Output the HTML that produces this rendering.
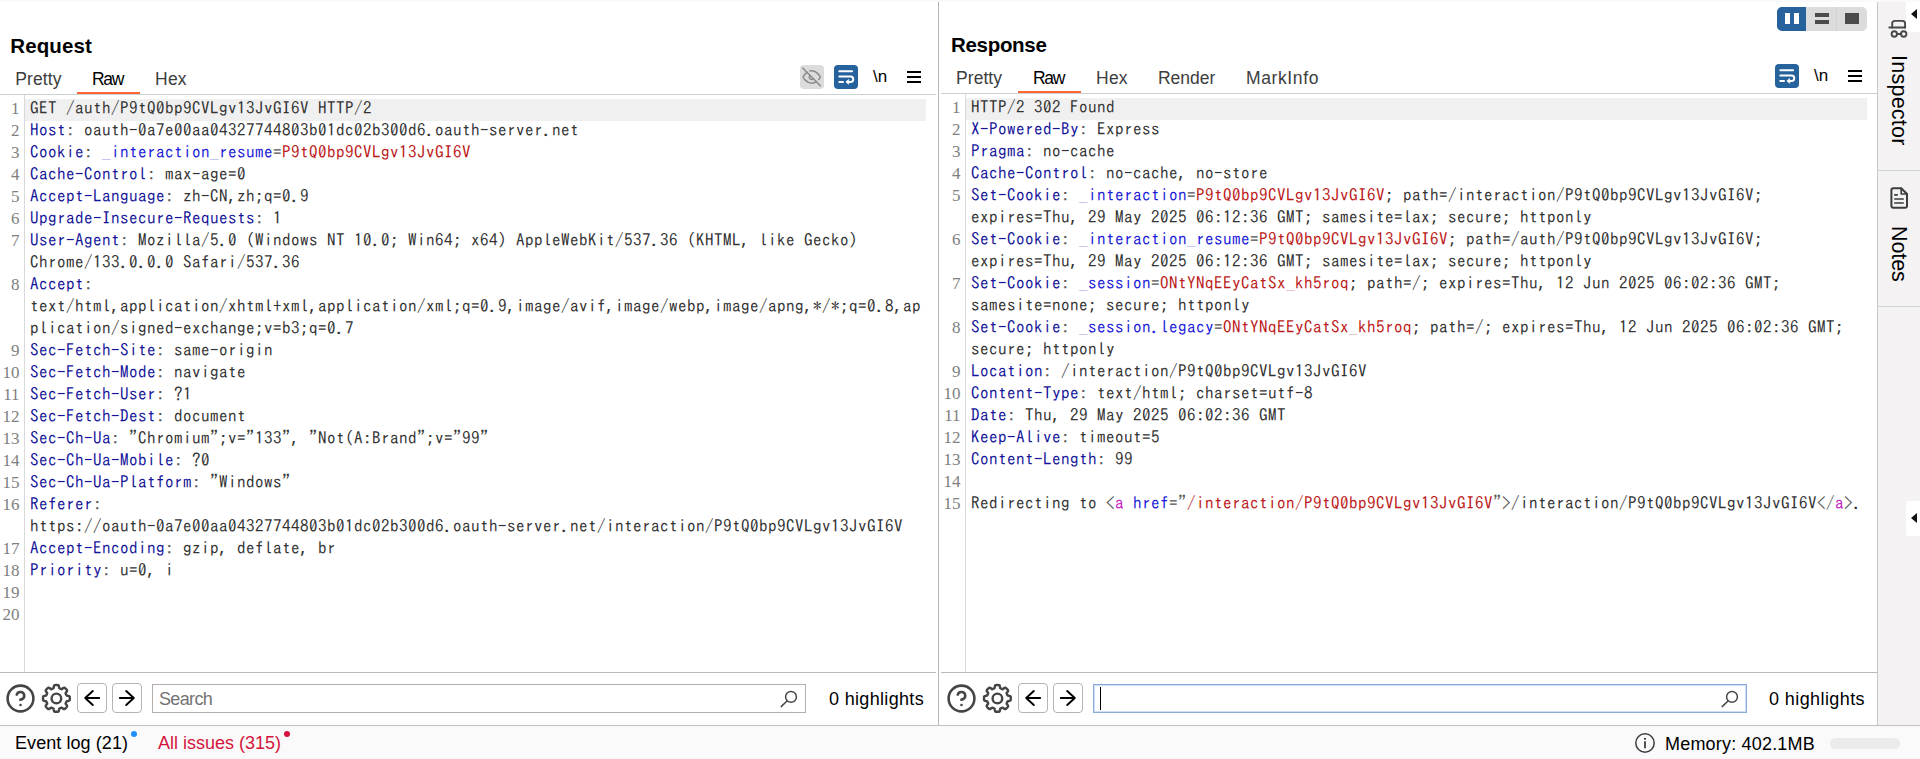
<!DOCTYPE html>
<html lang="en">
<head>
<meta charset="utf-8">
<title>Burp Suite - Request / Response</title>
<style>
*{box-sizing:border-box;margin:0;padding:0}
html,body{width:1920px;height:759px;overflow:hidden;background:#fff}
body{position:relative;font-family:"Liberation Sans","DejaVu Sans",sans-serif;color:#000}
.abs{position:absolute}
.topstrip{left:0;top:0;width:1920px;height:2px;background:#fafafa}
.vdiv{left:938px;top:2px;width:1px;height:723px;background:#bbb4b4}
.title{font-weight:bold;font-size:20.5px;line-height:24px;white-space:nowrap}
.tab{font-size:17.5px;line-height:22px;color:#3d3d3d;white-space:nowrap}
.tab.sel{color:#000}
.uline{height:2px;background:#ff6633}
.hline{height:1px;background:#c9d1d1}
.hline2{height:1px;background:#bdb8b8}
.gutter{width:1px;background:#d9d9d9}
.code{font-family:"IPAGothic","Liberation Mono",monospace;font-size:17px;letter-spacing:0.5px;line-height:22px;color:#1f1f1f}
.ln{height:22px;position:relative}
.ln i{position:absolute;left:-30.5px;width:20px;top:-0.6px;text-align:right;font-style:normal;color:#808080;font-family:"Liberation Serif",serif;font-size:17px;letter-spacing:0}
.ln b{position:absolute;left:0;top:-2px;font-weight:normal;white-space:pre}
.band{background:#f0f0f0;height:22px}
.n{color:#14149a}.c{color:#555}.v{color:#333}.k{color:#333}.b{color:#1a1ad8}.r{color:#bc1a1a}.m{color:#c41ac4}
.sidebar{left:1878px;top:2px;width:42px;height:723px;background:#f4f2f3}
.sideline{left:1877px;top:2px;width:1px;height:723px;background:#c4c8cc}
.status{left:0;top:726px;width:1920px;height:33px;background:#fafafa}
.statusline{left:0;top:725px;width:1920px;height:1px;background:#c4c0c0}
.stxt{font-size:18px;line-height:22px;white-space:nowrap}
.btn{width:30px;height:30px;border:1px solid #bbb2b2;border-radius:4px;background:#fff}
.search{height:29px;border:1px solid #b5acac;background:#fff}
.search.focus{border:1px solid #89acd9;box-shadow:inset 0 0 0 1px #cfdff4}
.vtext{font-size:21.5px;line-height:24px;white-space:nowrap;transform-origin:0 0;transform:rotate(90deg)}

.wrapbtn{width:24px;height:24px;border-radius:4px;background:#26629c}
.nl{font-size:17px;line-height:24px;white-space:nowrap;color:#000}
.ham{width:14px;height:12px}
.ham s{display:block;height:2px;background:#000;margin-bottom:3px;text-decoration:none}
.ph{position:absolute;left:7px;top:2px;font-size:18px;line-height:22px;color:#7f7f7f}
.mag{position:absolute;right:6px;top:4px}
.caret{position:absolute;left:6px;top:2px;width:1px;height:23px;background:#000}
.dot{width:6px;height:6px;border-radius:50%}
svg{display:block;overflow:visible}
</style>
</head>
<body>
<div class="abs topstrip"></div>

<!-- ===== Request panel ===== -->
<div class="abs uline" style="left:77px;top:92px;width:63px"></div>
<div class="abs hline" style="left:0;top:94px;width:936px"></div>
<div class="abs gutter" style="left:24px;top:95px;height:577px"></div>
<div class="abs band" style="left:25px;top:99px;width:901px"></div>
<div class="abs code" style="left:30px;top:99px;width:900px">
<div class="ln"><i>1</i><b><span class="k">GET /auth/P9tQ0bp9CVLgv13JvGI6V HTTP/2</span></b></div>
<div class="ln"><i>2</i><b><span class="n">Host</span><span class="c">:</span><span class="v"> oauth-0a7e00aa04327744803b01dc02b300d6.oauth-server.net</span></b></div>
<div class="ln"><i>3</i><b><span class="n">Cookie</span><span class="c">:</span><span class="v"> </span><span class="b">_interaction_resume</span><span class="c">=</span><span class="r">P9tQ0bp9CVLgv13JvGI6V</span></b></div>
<div class="ln"><i>4</i><b><span class="n">Cache-Control</span><span class="c">:</span><span class="v"> max-age=0</span></b></div>
<div class="ln"><i>5</i><b><span class="n">Accept-Language</span><span class="c">:</span><span class="v"> zh-CN,zh;q=0.9</span></b></div>
<div class="ln"><i>6</i><b><span class="n">Upgrade-Insecure-Requests</span><span class="c">:</span><span class="v"> 1</span></b></div>
<div class="ln"><i>7</i><b><span class="n">User-Agent</span><span class="c">:</span><span class="v"> Mozilla/5.0 (Windows NT 10.0; Win64; x64) AppleWebKit/537.36 (KHTML, like Gecko)</span></b></div>
<div class="ln"><i></i><b><span class="v">Chrome/133.0.0.0 Safari/537.36</span></b></div>
<div class="ln"><i>8</i><b><span class="n">Accept</span><span class="c">:</span></b></div>
<div class="ln"><i></i><b><span class="v">text/html,application/xhtml+xml,application/xml;q=0.9,image/avif,image/webp,image/apng,*/*;q=0.8,ap</span></b></div>
<div class="ln"><i></i><b><span class="v">plication/signed-exchange;v=b3;q=0.7</span></b></div>
<div class="ln"><i>9</i><b><span class="n">Sec-Fetch-Site</span><span class="c">:</span><span class="v"> same-origin</span></b></div>
<div class="ln"><i>10</i><b><span class="n">Sec-Fetch-Mode</span><span class="c">:</span><span class="v"> navigate</span></b></div>
<div class="ln"><i>11</i><b><span class="n">Sec-Fetch-User</span><span class="c">:</span><span class="v"> ?1</span></b></div>
<div class="ln"><i>12</i><b><span class="n">Sec-Fetch-Dest</span><span class="c">:</span><span class="v"> document</span></b></div>
<div class="ln"><i>13</i><b><span class="n">Sec-Ch-Ua</span><span class="c">:</span><span class="v"> "Chromium";v="133", "Not(A:Brand";v="99"</span></b></div>
<div class="ln"><i>14</i><b><span class="n">Sec-Ch-Ua-Mobile</span><span class="c">:</span><span class="v"> ?0</span></b></div>
<div class="ln"><i>15</i><b><span class="n">Sec-Ch-Ua-Platform</span><span class="c">:</span><span class="v"> "Windows"</span></b></div>
<div class="ln"><i>16</i><b><span class="n">Referer</span><span class="c">:</span></b></div>
<div class="ln"><i></i><b><span class="v">https://oauth-0a7e00aa04327744803b01dc02b300d6.oauth-server.net/interaction/P9tQ0bp9CVLgv13JvGI6V</span></b></div>
<div class="ln"><i>17</i><b><span class="n">Accept-Encoding</span><span class="c">:</span><span class="v"> gzip, deflate, br</span></b></div>
<div class="ln"><i>18</i><b><span class="n">Priority</span><span class="c">:</span><span class="v"> u=0, i</span></b></div>
<div class="ln"><i>19</i><b></b></div>
<div class="ln"><i>20</i><b></b></div>
</div>
<div class="abs hline2" style="left:0;top:672px;width:936px"></div>


<!-- request toolbar icons -->
<div class="abs" style="left:800px;top:65px;width:24px;height:24px;border-radius:4px;background:#dcdcdc">
<svg width="24" height="24" viewBox="0 0 24 24" fill="none" stroke="#8c8c8c" stroke-width="2" stroke-linecap="round" stroke-linejoin="round"><g transform="translate(11.7 12) scale(0.79) translate(-12 -12)"><path d="M17.94 17.94A10.07 10.07 0 0 1 12 20c-7 0-11-8-11-8a18.45 18.45 0 0 1 5.06-5.94M9.9 4.24A9.12 9.12 0 0 1 12 4c7 0 11 8 11 8a18.5 18.5 0 0 1-2.16 3.19m-6.72-1.07a3 3 0 1 1-4.24-4.24"/><path d="M0.6 0.6L23 23"/></g></svg>
</div>
<div class="abs wrapbtn" style="left:834px;top:65px">
<svg width="24" height="24" viewBox="0 0 24 24" fill="none" stroke="#fff" stroke-width="2" stroke-linecap="round" stroke-linejoin="round"><path d="M5.300 6.200H18.100"/><path d="M5.300 11.600H16.600a2.650 2.650 0 0 1 0 5.300H14"/><path d="M5.300 16.900H9"/><path d="M14.400 14.800L11.900 16.900L14.400 19Z" fill="#fff" stroke-width="0.800"/></svg>
</div>
<div class="abs ham" style="left:907px;top:71px"><s></s><s></s><s></s></div>

<!-- request bottom bar -->
<div class="abs" style="left:6px;top:684px"><svg width="29" height="29" viewBox="0 0 29 29" fill="none" stroke="#454545" stroke-linecap="round" stroke-linejoin="round"><g transform="translate(14.5 14.5) scale(1.29) translate(-12 -12)" stroke-width="2"><circle cx="12" cy="12" r="10"/><path d="M9.09 9a3 3 0 0 1 5.83 1c0 2-3 3-3 3"/><path d="M12 17h.01"/></g></svg></div>
<div class="abs" style="left:42px;top:684px"><svg width="29" height="29" viewBox="0 0 29 29" fill="none" stroke="#454545" stroke-width="2.4" stroke-linecap="round" stroke-linejoin="round"><path d="M14.4 1.0L15.0 1.0L15.6 1.1L16.1 1.1L16.7 1.5L17.0 2.9L17.2 4.1L17.6 4.4L18.0 4.5L18.4 4.7L18.8 4.9L19.2 5.1L19.7 5.2L20.7 4.4L21.9 3.7L22.6 3.8L23.0 4.1L23.5 4.5L23.9 4.9L24.3 5.3L24.7 5.8L25.0 6.2L25.1 6.9L24.4 8.1L23.6 9.1L23.7 9.6L23.9 10.0L24.1 10.4L24.3 10.8L24.4 11.2L24.7 11.6L25.9 11.8L27.3 12.1L27.7 12.7L27.7 13.2L27.8 13.8L27.8 14.4L27.8 15.0L27.7 15.6L27.7 16.1L27.3 16.7L25.9 17.0L24.7 17.2L24.4 17.6L24.3 18.0L24.1 18.4L23.9 18.8L23.7 19.2L23.6 19.7L24.4 20.7L25.1 21.9L25.0 22.6L24.7 23.0L24.3 23.5L23.9 23.9L23.5 24.3L23.0 24.7L22.6 25.0L21.9 25.1L20.7 24.4L19.7 23.6L19.2 23.7L18.8 23.9L18.4 24.1L18.0 24.3L17.6 24.4L17.2 24.7L17.0 25.9L16.7 27.3L16.1 27.7L15.6 27.7L15.0 27.8L14.4 27.8L13.8 27.8L13.2 27.7L12.7 27.7L12.1 27.3L11.8 25.9L11.6 24.7L11.2 24.4L10.8 24.3L10.4 24.1L10.0 23.9L9.6 23.7L9.1 23.6L8.1 24.4L6.9 25.1L6.2 25.0L5.8 24.7L5.3 24.3L4.9 23.9L4.5 23.5L4.1 23.0L3.8 22.6L3.7 21.9L4.4 20.7L5.2 19.7L5.1 19.2L4.9 18.8L4.7 18.4L4.5 18.0L4.4 17.6L4.1 17.2L2.9 17.0L1.5 16.7L1.1 16.1L1.1 15.6L1.0 15.0L1.0 14.4L1.0 13.8L1.1 13.2L1.1 12.7L1.5 12.1L2.9 11.8L4.1 11.6L4.4 11.2L4.5 10.8L4.7 10.4L4.9 10.0L5.1 9.6L5.2 9.1L4.4 8.1L3.7 6.9L3.8 6.2L4.1 5.8L4.5 5.3L4.9 4.9L5.3 4.5L5.8 4.1L6.2 3.8L6.9 3.7L8.1 4.4L9.1 5.2L9.6 5.1L10.0 4.9L10.4 4.7L10.8 4.5L11.2 4.4L11.6 4.1L11.8 2.9L12.1 1.5L12.7 1.1L13.2 1.1L13.8 1.0Z"/><circle cx="14.4" cy="14.4" r="4.8"/></svg></div>
<div class="abs btn" style="left:77px;top:683px"><svg width="28" height="28" viewBox="0 0 28 28" fill="none" stroke="#000" stroke-width="1.9" stroke-linecap="round" stroke-linejoin="round"><path d="M21.2 14H7.2M14.8 7L7.2 14L14.8 21"/></svg></div>
<div class="abs btn" style="left:112px;top:683px"><svg width="28" height="28" viewBox="0 0 28 28" fill="none" stroke="#000" stroke-width="1.9" stroke-linecap="round" stroke-linejoin="round"><path d="M6.8 14H20.8M13.2 7L20.8 14L13.2 21"/></svg></div>
<div class="abs search" style="left:152px;top:684px;width:654px">
<svg class="mag" width="20" height="20" viewBox="0 0 20 20" fill="none" stroke="#454545" stroke-width="1.5" stroke-linecap="round"><circle cx="12" cy="7.9" r="5.4"/><path d="M8 12L2.2 17.6"/></svg></div>

<!-- ===== Response panel ===== -->
<div class="abs uline" style="left:1018px;top:91px;width:63px"></div>
<div class="abs hline" style="left:941px;top:93px;width:936px"></div>
<div class="abs gutter" style="left:965px;top:94px;height:578px"></div>
<div class="abs band" style="left:966px;top:98px;width:901px"></div>
<div class="abs code" style="left:971px;top:98px;width:900px">
<div class="ln"><i>1</i><b><span class="k">HTTP/2 302 Found</span></b></div>
<div class="ln"><i>2</i><b><span class="n">X-Powered-By</span><span class="c">:</span><span class="v"> Express</span></b></div>
<div class="ln"><i>3</i><b><span class="n">Pragma</span><span class="c">:</span><span class="v"> no-cache</span></b></div>
<div class="ln"><i>4</i><b><span class="n">Cache-Control</span><span class="c">:</span><span class="v"> no-cache, no-store</span></b></div>
<div class="ln"><i>5</i><b><span class="n">Set-Cookie</span><span class="c">:</span><span class="v"> </span><span class="b">_interaction</span><span class="c">=</span><span class="r">P9tQ0bp9CVLgv13JvGI6V</span><span class="v">; path=/interaction/P9tQ0bp9CVLgv13JvGI6V;</span></b></div>
<div class="ln"><i></i><b><span class="v">expires=Thu, 29 May 2025 06:12:36 GMT; samesite=lax; secure; httponly</span></b></div>
<div class="ln"><i>6</i><b><span class="n">Set-Cookie</span><span class="c">:</span><span class="v"> </span><span class="b">_interaction_resume</span><span class="c">=</span><span class="r">P9tQ0bp9CVLgv13JvGI6V</span><span class="v">; path=/auth/P9tQ0bp9CVLgv13JvGI6V;</span></b></div>
<div class="ln"><i></i><b><span class="v">expires=Thu, 29 May 2025 06:12:36 GMT; samesite=lax; secure; httponly</span></b></div>
<div class="ln"><i>7</i><b><span class="n">Set-Cookie</span><span class="c">:</span><span class="v"> </span><span class="b">_session</span><span class="c">=</span><span class="r">ONtYNqEEyCatSx_kh5roq</span><span class="v">; path=/; expires=Thu, 12 Jun 2025 06:02:36 GMT;</span></b></div>
<div class="ln"><i></i><b><span class="v">samesite=none; secure; httponly</span></b></div>
<div class="ln"><i>8</i><b><span class="n">Set-Cookie</span><span class="c">:</span><span class="v"> </span><span class="b">_session.legacy</span><span class="c">=</span><span class="r">ONtYNqEEyCatSx_kh5roq</span><span class="v">; path=/; expires=Thu, 12 Jun 2025 06:02:36 GMT;</span></b></div>
<div class="ln"><i></i><b><span class="v">secure; httponly</span></b></div>
<div class="ln"><i>9</i><b><span class="n">Location</span><span class="c">:</span><span class="v"> /interaction/P9tQ0bp9CVLgv13JvGI6V</span></b></div>
<div class="ln"><i>10</i><b><span class="n">Content-Type</span><span class="c">:</span><span class="v"> text/html; charset=utf-8</span></b></div>
<div class="ln"><i>11</i><b><span class="n">Date</span><span class="c">:</span><span class="v"> Thu, 29 May 2025 06:02:36 GMT</span></b></div>
<div class="ln"><i>12</i><b><span class="n">Keep-Alive</span><span class="c">:</span><span class="v"> timeout=5</span></b></div>
<div class="ln"><i>13</i><b><span class="n">Content-Length</span><span class="c">:</span><span class="v"> 99</span></b></div>
<div class="ln"><i>14</i><b></b></div>
<div class="ln"><i>15</i><b><span class="v">Redirecting to </span><span class="c">&lt;</span><span class="m">a</span><span class="v"> </span><span class="b">href</span><span class="c">=</span><span class="c">"</span><span class="r">/interaction/P9tQ0bp9CVLgv13JvGI6V</span><span class="c">"</span><span class="c">&gt;</span><span class="v">/interaction/P9tQ0bp9CVLgv13JvGI6V</span><span class="c">&lt;/</span><span class="m">a</span><span class="c">&gt;</span><span class="v">.</span></b></div>
</div>
<div class="abs hline2" style="left:941px;top:672px;width:936px"></div>


<!-- response toolbar icons -->
<div class="abs wrapbtn" style="left:1775px;top:64px">
<svg width="24" height="24" viewBox="0 0 24 24" fill="none" stroke="#fff" stroke-width="2" stroke-linecap="round" stroke-linejoin="round"><path d="M5.300 6.200H18.100"/><path d="M5.300 11.600H16.600a2.650 2.650 0 0 1 0 5.300H14"/><path d="M5.300 16.900H9"/><path d="M14.400 14.800L11.900 16.900L14.400 19Z" fill="#fff" stroke-width="0.800"/></svg>
</div>
<div class="abs ham" style="left:1848px;top:70px"><s></s><s></s><s></s></div>

<!-- layout toggle -->
<div class="abs" style="left:1777px;top:7px;width:90px;height:24px;border-radius:5px;background:#dcdcdc;overflow:hidden">
<div class="abs" style="left:0;top:0;width:29px;height:24px;background:#26629c"></div>
<div class="abs" style="left:8px;top:6px;width:5px;height:11px;background:#fff"></div>
<div class="abs" style="left:17px;top:6px;width:5px;height:11px;background:#fff"></div>
<div class="abs" style="left:38px;top:6px;width:14px;height:4px;background:#4b4b4b"></div>
<div class="abs" style="left:38px;top:13px;width:14px;height:4px;background:#4b4b4b"></div>
<div class="abs" style="left:59px;top:0;width:1px;height:24px;background:#d2d2d2"></div>
<div class="abs" style="left:68px;top:6px;width:14px;height:11px;background:#4b4b4b"></div>
</div>

<!-- response bottom bar -->
<div class="abs" style="left:947px;top:684px"><svg width="29" height="29" viewBox="0 0 29 29" fill="none" stroke="#454545" stroke-linecap="round" stroke-linejoin="round"><g transform="translate(14.5 14.5) scale(1.29) translate(-12 -12)" stroke-width="2"><circle cx="12" cy="12" r="10"/><path d="M9.09 9a3 3 0 0 1 5.83 1c0 2-3 3-3 3"/><path d="M12 17h.01"/></g></svg></div>
<div class="abs" style="left:983px;top:684px"><svg width="29" height="29" viewBox="0 0 29 29" fill="none" stroke="#454545" stroke-width="2.4" stroke-linecap="round" stroke-linejoin="round"><path d="M14.4 1.0L15.0 1.0L15.6 1.1L16.1 1.1L16.7 1.5L17.0 2.9L17.2 4.1L17.6 4.4L18.0 4.5L18.4 4.7L18.8 4.9L19.2 5.1L19.7 5.2L20.7 4.4L21.9 3.7L22.6 3.8L23.0 4.1L23.5 4.5L23.9 4.9L24.3 5.3L24.7 5.8L25.0 6.2L25.1 6.9L24.4 8.1L23.6 9.1L23.7 9.6L23.9 10.0L24.1 10.4L24.3 10.8L24.4 11.2L24.7 11.6L25.9 11.8L27.3 12.1L27.7 12.7L27.7 13.2L27.8 13.8L27.8 14.4L27.8 15.0L27.7 15.6L27.7 16.1L27.3 16.7L25.9 17.0L24.7 17.2L24.4 17.6L24.3 18.0L24.1 18.4L23.9 18.8L23.7 19.2L23.6 19.7L24.4 20.7L25.1 21.9L25.0 22.6L24.7 23.0L24.3 23.5L23.9 23.9L23.5 24.3L23.0 24.7L22.6 25.0L21.9 25.1L20.7 24.4L19.7 23.6L19.2 23.7L18.8 23.9L18.4 24.1L18.0 24.3L17.6 24.4L17.2 24.7L17.0 25.9L16.7 27.3L16.1 27.7L15.6 27.7L15.0 27.8L14.4 27.8L13.8 27.8L13.2 27.7L12.7 27.7L12.1 27.3L11.8 25.9L11.6 24.7L11.2 24.4L10.8 24.3L10.4 24.1L10.0 23.9L9.6 23.7L9.1 23.6L8.1 24.4L6.9 25.1L6.2 25.0L5.8 24.7L5.3 24.3L4.9 23.9L4.5 23.5L4.1 23.0L3.8 22.6L3.7 21.9L4.4 20.7L5.2 19.7L5.1 19.2L4.9 18.8L4.7 18.4L4.5 18.0L4.4 17.6L4.1 17.2L2.9 17.0L1.5 16.7L1.1 16.1L1.1 15.6L1.0 15.0L1.0 14.4L1.0 13.8L1.1 13.2L1.1 12.7L1.5 12.1L2.9 11.8L4.1 11.6L4.4 11.2L4.5 10.8L4.7 10.4L4.9 10.0L5.1 9.6L5.2 9.1L4.4 8.1L3.7 6.9L3.8 6.2L4.1 5.8L4.5 5.3L4.9 4.9L5.3 4.5L5.8 4.1L6.2 3.8L6.9 3.7L8.1 4.4L9.1 5.2L9.6 5.1L10.0 4.9L10.4 4.7L10.8 4.5L11.2 4.4L11.6 4.1L11.8 2.9L12.1 1.5L12.7 1.1L13.2 1.1L13.8 1.0Z"/><circle cx="14.4" cy="14.4" r="4.8"/></svg></div>
<div class="abs btn" style="left:1018px;top:683px"><svg width="28" height="28" viewBox="0 0 28 28" fill="none" stroke="#000" stroke-width="1.9" stroke-linecap="round" stroke-linejoin="round"><path d="M21.2 14H7.2M14.8 7L7.2 14L14.8 21"/></svg></div>
<div class="abs btn" style="left:1053px;top:683px"><svg width="28" height="28" viewBox="0 0 28 28" fill="none" stroke="#000" stroke-width="1.9" stroke-linecap="round" stroke-linejoin="round"><path d="M6.8 14H20.8M13.2 7L20.8 14L13.2 21"/></svg></div>
<div class="abs search focus" style="left:1093px;top:684px;width:654px"><span class="caret"></span>
<svg class="mag" width="20" height="20" viewBox="0 0 20 20" fill="none" stroke="#454545" stroke-width="1.5" stroke-linecap="round"><circle cx="12" cy="7.9" r="5.4"/><path d="M8 12L2.2 17.6"/></svg></div>

<div class="abs vdiv"></div>

<!-- ===== Sidebar ===== -->
<div class="abs sidebar"></div>
<div class="abs sideline"></div>
<div class="abs" style="left:1906px;top:2px;width:14px;height:30px;background:#fff"></div>
<svg class="abs" style="left:1911px;top:9px" width="6" height="10" viewBox="0 0 6 10"><path d="M0 5L6 0V10Z" fill="#111"/></svg>
<svg class="abs" style="left:1886px;top:18px" width="24" height="24" viewBox="0 0 24 24" fill="none" stroke="#484848" stroke-width="1.9" stroke-linecap="round" stroke-linejoin="round"><path d="M3.3 9.5H19.1"/><path d="M6.2 9.5V5.6a2.7 2.7 0 0 1 2.7-2.7H16.4a2.7 2.7 0 0 1 2.7 2.7V9.5"/><circle cx="8.3" cy="16" r="2.7"/><circle cx="17.7" cy="16" r="2.7"/><path d="M11 16H15"/></svg>
<div class="abs vtext" style="left:1911.3px;top:55.3px;letter-spacing:0.25px">Inspector</div>
<div class="abs" style="left:1878px;top:170px;width:42px;height:1px;background:#cfd5d7"></div>
<svg class="abs" style="left:1887px;top:186px" width="24" height="24" viewBox="0 0 24 24" fill="none" stroke="#3d3d3d" stroke-width="2" stroke-linecap="round" stroke-linejoin="round"><path d="M6.2 2.2H14.2L20 8V20a1.8 1.8 0 0 1-1.8 1.8H6.2A1.8 1.8 0 0 1 4.400 20V4A1.8 1.8 0 0 1 6.2 2.2Z"/><path d="M14.2 2.4V8H19.800" stroke-width="1.6"/><path d="M7.200 8.800H10.800M7.200 13H16.800M7.200 17H16.800" stroke-width="1.7" stroke-linecap="butt"/></svg>
<div class="abs vtext" style="left:1911.3px;top:225.5px;letter-spacing:-0.1px">Notes</div>
<div class="abs" style="left:1878px;top:306px;width:42px;height:1px;background:#cfd5d7"></div>
<div class="abs" style="left:1906px;top:501px;width:14px;height:35px;background:#fff;border-radius:3px 0 0 3px"></div>
<svg class="abs" style="left:1911px;top:513px" width="6" height="10" viewBox="0 0 6 10"><path d="M0 5L6 0V10Z" fill="#111"/></svg>


<!-- ===== Status bar ===== -->
<div class="abs statusline"></div>
<div class="abs status"></div>

<div class="abs dot" style="left:131px;top:731px;background:#1e90ff"></div>
<div class="abs dot" style="left:284px;top:731px;background:#d4143c"></div>
<svg class="abs" style="left:1634px;top:732px" width="22" height="22" viewBox="0 0 22 22" fill="none" stroke="#3d3d3d" stroke-width="1.5" stroke-linecap="round"><circle cx="11" cy="11" r="9.2"/><path d="M11 10V15.500" stroke-width="1.8"/><circle cx="11" cy="6.800" r="1.1" fill="#3d3d3d" stroke="none"/></svg>
<div class="abs" style="left:1830px;top:738px;width:70px;height:11px;border-radius:6px;background:#ebebeb"></div>
<div id="req_title" class="abs title" style="left:10.2px;top:34px;letter-spacing:0.14px">Request</div>
<div id="req_pretty" class="abs tab" style="left:15.2px;top:68px;letter-spacing:0.13px">Pretty</div>
<div id="req_raw" class="abs tab sel" style="left:92px;top:68px;letter-spacing:-1.35px">Raw</div>
<div id="req_hex" class="abs tab" style="left:155px;top:68px;letter-spacing:0.25px">Hex</div>
<div id="req_nl" class="abs nl" style="left:873px;top:65px">\n</div>
<div id="req_hl" class="abs stxt" style="left:829px;top:688px;letter-spacing:0.33px">0 highlights</div>
<div id="res_title" class="abs title" style="left:951px;top:33px;letter-spacing:-0.31px">Response</div>
<div id="res_pretty" class="abs tab" style="left:956px;top:67px;letter-spacing:0.07px">Pretty</div>
<div id="res_raw" class="abs tab sel" style="left:1033px;top:67px;letter-spacing:-1.32px">Raw</div>
<div id="res_hex" class="abs tab" style="left:1096px;top:67px;letter-spacing:0.25px">Hex</div>
<div id="res_render" class="abs tab" style="left:1158px;top:67px;letter-spacing:-0.02px">Render</div>
<div id="res_markinfo" class="abs tab" style="left:1246px;top:67px;letter-spacing:0.62px">MarkInfo</div>
<div id="res_nl" class="abs nl" style="left:1814px;top:64px">\n</div>
<div id="res_hl" class="abs stxt" style="left:1769px;top:688px;letter-spacing:0.41px">0 highlights</div>
<div id="st_event" class="abs stxt" style="left:15px;top:732px;letter-spacing:0.07px">Event log (21)</div>
<div id="st_issues" class="abs stxt" style="left:158px;top:732px;color:#d4143c">All issues (315)</div>
<div id="st_mem" class="abs stxt" style="left:1665px;top:733px;letter-spacing:0.19px">Memory: 402.1MB</div>
<div id="req_search" class="abs stxt" style="left:159px;top:688px;letter-spacing:-0.66px;color:#747474">Search</div>
</body>
</html>
